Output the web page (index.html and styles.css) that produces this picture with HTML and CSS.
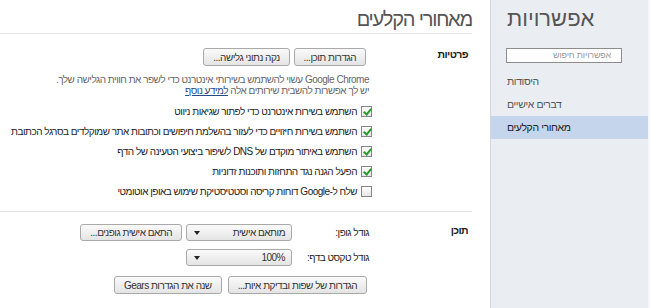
FILE: index.html
```html
<!DOCTYPE html>
<html lang="he" dir="rtl">
<head>
    <meta charset="UTF-8">
    <meta name="viewport" content="width=device-width, initial-scale=1.0">
    <title>אפשרויות</title>
    <link rel="stylesheet" href="styles.css">
</head>
<body>
    <aside class="sidebar">
        <h1 class="side-title">אפשרויות</h1>
        <div class="side-search">אפשרויות חיפוש</div>
        <ul class="side-nav">
            <li>היסודות</li>
            <li>דברים אישיים</li>
            <li class="active">מאחורי הקלעים</li>
        </ul>
    </aside>

    <main class="page">
        <h1 class="page-title">מאחורי הקלעים</h1>

        <section class="section">
            <h3 class="section-label">פרטיות</h3>
            <div class="section-body">
                <div class="button-row">
                    <button class="btn">הגדרות תוכן...</button>
                    <button class="btn">נקה נתוני גלישה...</button>
                </div>
                <p class="note">Google Chrome עשוי להשתמש בשירותי אינטרנט כדי לשפר את חווית הגלישה שלך.<br>יש לך אפשרות להשבית שירותים אלה <a href="#">למידע נוסף</a></p>

                <label class="check-row"><span class="check on"></span>השתמש בשירות אינטרנט כדי לפתור שגיאות ניווט</label>
                <label class="check-row"><span class="check on"></span>השתמש בשירות חיזויים כדי לעזור בהשלמת חיפושים וכתובות אתר שמוקלדים בסרגל הכתובת</label>
                <label class="check-row"><span class="check on"></span>השתמש באיתור מוקדם של DNS לשיפור ביצועי הטעינה של הדף</label>
                <label class="check-row"><span class="check on"></span>הפעל הגנה נגד התחזות ותוכנות זדוניות</label>
                <label class="check-row"><span class="check"></span>שלח ל-Google דוחות קריסה וסטטיסטיקת שימוש באופן אוטומטי</label>
            </div>
        </section>

        <section class="section last">
            <h3 class="section-label">תוכן</h3>
            <div class="section-body">
                <div class="field-row">
                    <span class="field-label">גודל גופן:</span>
                    <div class="select"><span>מותאם אישית</span><i class="arrow"></i></div>
                    <button class="btn">התאם אישית גופנים...</button>
                </div>
                <div class="field-row">
                    <span class="field-label">גודל טקסט בדף:</span>
                    <div class="select"><span>100%</span><i class="arrow"></i></div>
                </div>
                <div class="button-row bottom">
                    <button class="btn">הגדרות של שפות ובדיקת איות...</button>
                    <button class="btn">שנה את הגדרות Gears</button>
                </div>
            </div>
        </section>
    </main>
</body>
</html>
```

FILE: styles.css
```css
*{
    margin: 0px;
    padding: 0px;
    box-sizing: border-box;
}

body{
    margin: 0px;
    width: 650px;
    height: 308px;
    display: flex;
    font-family: "Liberation Sans", Arial, sans-serif;
    font-size: 10px;
    letter-spacing: -0.5px;
    color: #222;
    background-color: #FFF;
    overflow: hidden;
}

/* sidebar */

.sidebar{
    width: 160px;
    flex-shrink: 0;
    background-color: #EAEEF2;
    border-left: 1px solid #D3D9DF;
    border-right: 2px solid #F5F7F9;
    text-align: left;
}

.side-title{
    font-size: 22px;
    font-weight: normal;
    letter-spacing: 0px;
    line-height: 26px;
    color: #555;
    padding: 6px 0px 0px 16px;
}

.side-search{
    margin: 16px auto 0px 15px;
    width: 116px;
    height: 15px;
    border: 1px solid #8C8C8C;
    background-color: #FFF;
    color: #999;
    font-size: 9px;
    letter-spacing: -0.2px;
    line-height: 13px;
    text-align: right;
    padding-right: 10px;
}

.side-nav{
    list-style: none;
    margin-top: 7px;
}

.side-nav li{
    height: 23px;
    line-height: 23px;
    padding-left: 16px;
    color: #555;
    font-size: 10.5px;
    letter-spacing: -0.4px;
}

.side-nav li.active{
    background-color: #C5D6EC;
    color: #222;
}

/* main page */

.page{
    flex: 1;
}

.page-title{
    font-size: 20px;
    font-weight: normal;
    letter-spacing: -1.2px;
    line-height: 26px;
    color: #555;
    padding-top: 6px;
    padding-bottom: 1px;
    margin-right: 18px;
    border-bottom: 1px solid #E4E4E4;
}

.section{
    display: flex;
    margin-right: 18px;
    padding: 14px 0px 10px 0px;
    border-bottom: 1px solid #E4E4E4;
}

.section.last{
    border-bottom: 0px;
    padding-top: 12px;
}

.section-label{
    width: 100px;
    flex-shrink: 0;
    font-size: 10.5px;
    letter-spacing: -0.6px;
    line-height: 12px;
    padding-right: 4px;
    color: #222;
}

.section-body{
    flex: 1;
}

.button-row{
    display: flex;
    gap: 4px;
    padding-right: 6px;
}

.button-row.bottom{
    gap: 6px;
    padding-right: 5px;
    margin-top: 10px;
}

.btn{
    height: 18px;
    padding: 0px 9px;
    font-family: inherit;
    font-size: 10px;
    letter-spacing: inherit;
    color: #333;
    border: 1px solid #A9A9A9;
    border-radius: 3px;
    background: linear-gradient(#FAFAFA, #E4E4E4);
    white-space: nowrap;
}

.field-row .btn{
    height: 17px;
}

.note{
    margin-top: 8px;
    padding-right: 3px;
    color: #666;
    line-height: 11px;
    white-space: nowrap;
}

.note a{
    color: #284A80;
}

.check-row{
    display: flex;
    align-items: center;
    gap: 4px;
    height: 20px;
    white-space: nowrap;
}

.note + .check-row{
    margin-top: 5px;
}

.check{
    width: 11px;
    height: 11px;
    flex-shrink: 0;
    border: 1px solid #858585;
    background: linear-gradient(#FFF, #E6E6E6);
    position: relative;
}

.check.on::after{
    content: "";
    position: absolute;
    left: 3px;
    top: 0px;
    width: 3px;
    height: 6px;
    border-right: 2px solid #2E9A2E;
    border-bottom: 2px solid #2E9A2E;
    transform: rotate(40deg);
}

.field-row{
    display: flex;
    align-items: center;
    height: 17px;
    margin-bottom: 8px;
}

.field-label{
    width: 80px;
    padding-right: 3px;
    white-space: nowrap;
}

.select{
    width: 106px;
    height: 17px;
    display: flex;
    justify-content: space-between;
    align-items: center;
    padding: 0px 6px 0px 7px;
    border: 1px solid #A9A9A9;
    border-radius: 3px;
    background: linear-gradient(#FAFAFA, #E4E4E4);
    color: #333;
    margin-left: 4px;
}

.arrow{
    width: 0px;
    height: 0px;
    border-left: 3px solid transparent;
    border-right: 3px solid transparent;
    border-top: 4px solid #222;
}
```
